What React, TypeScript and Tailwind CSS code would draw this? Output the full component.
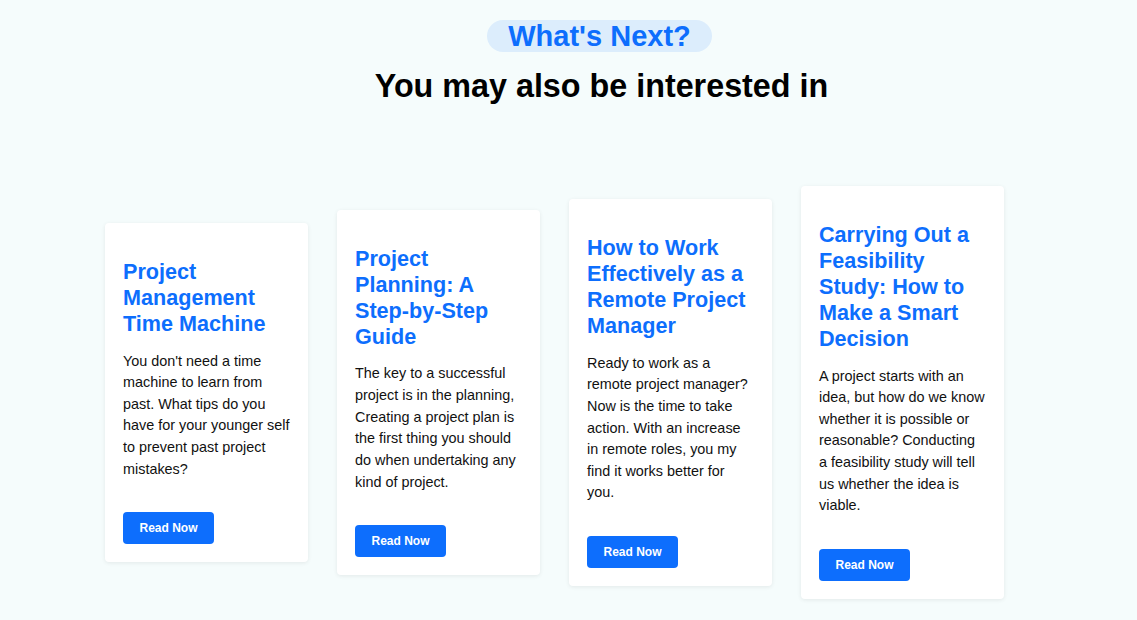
import React from "react";

const cards = [
  {
    title: "Project Management Time Machine",
    body: "You don't need a time machine to learn from past. What tips do you have for your younger self to prevent past project mistakes?",
  },
  {
    title: "Project Planning: A Step-by-Step Guide",
    body: "The key to a successful project is in the planning, Creating a project plan is the first thing you should do when undertaking any kind of project.",
  },
  {
    title: "How to Work Effectively as a Remote Project Manager",
    body: "Ready to work as a remote project manager? Now is the time to take action. With an increase in remote roles, you my find it works better for you.",
  },
  {
    title: "Carrying Out a Feasibility Study: How to Make a Smart Decision",
    body: "A project starts with an idea, but how do we know whether it is possible or reasonable? Conducting a feasibility study will tell us whether the idea is viable.",
  },
];

export default function App() {
  return (
    <div className="min-h-screen w-full bg-[#f5fcfc] font-['Liberation_Sans',Arial,sans-serif]">
      <div className="flex flex-col items-center pt-[20px] pl-[62px]">
        <div className="h-[32px] rounded-full bg-[#dcedfc] px-[21px] text-[29px] font-bold leading-[32px] text-[#0d6efd]">
          What's Next?
        </div>
        <h2 className="mt-[15px] pl-[4px] text-[32.3px] font-bold leading-[38px] text-black">
          You may also be interested in
        </h2>
      </div>
      <div className="mt-[35px] flex h-[505px] items-center gap-[29px] pl-[105px]">
        {cards.map((c) => (
          <div
            key={c.title}
            className="w-[203px] rounded-[4px] bg-white px-[18px] pb-[18px] pt-[36px] shadow-[0_1px_4px_rgba(0,0,0,0.08)]"
          >
            <h3 className="text-[21.6px] font-bold leading-[1.2] text-[#0d6efd]">{c.title}</h3>
            <p className="mt-[14px] text-[14.4px] leading-[1.5] text-[#111]">{c.body}</p>
            <button className="mt-[32px] h-[32px] w-[91px] rounded-[4px] bg-[#0d6efd] text-[12px] font-semibold text-white">
              Read Now
            </button>
          </div>
        ))}
      </div>
    </div>
  );
}
